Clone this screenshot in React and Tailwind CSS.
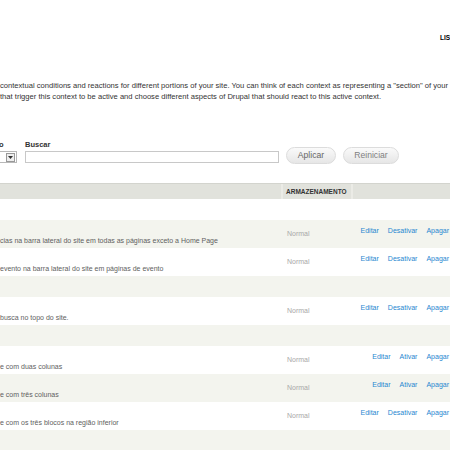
import React from "react";

const rows = [
  { type: "group" },
  { type: "item", desc: "cias na barra lateral do site em todas as páginas exceto a Home Page", active: true },
  { type: "item", desc: "evento na barra lateral do site em páginas de evento", active: true },
  { type: "group" },
  { type: "item", desc: "busca no topo do site.", active: true },
  { type: "group" },
  { type: "item", desc: "e com duas colunas", active: false },
  { type: "item", desc: "e com três colunas", active: false },
  { type: "item", desc: "e com os três blocos na região inferior", active: true },
  { type: "group" },
];

function Row({ row, index }) {
  const bg = index % 2 === 0 ? "bg-white" : "bg-[#f3f4ee]";
  if (row.type === "group") {
    return <div className={`h-[21px] ${bg}`} />;
  }
  return (
    <div className={`flex h-[28px] ${bg}`}>
      <div className="w-[281px] pt-[15px] text-[#5e5e5e] leading-[11px] whitespace-nowrap">
        {row.desc}
      </div>
      <div className="w-[72px] flex items-center pl-[6px] pt-[1px] text-[#a8a8a8]">
        Normal
      </div>
      <div className="flex-1 flex justify-end gap-[9px] pr-[31px] pt-[5px] leading-[11px] text-[#1f87d0]">
        <a href="#">Editar</a>
        <a href="#">{row.active ? "Desativar" : "Ativar"}</a>
        <a href="#">Apagar</a>
      </div>
    </div>
  );
}

export default function App() {
  return (
    <div className="w-[450px] h-[450px] overflow-hidden bg-white font-['Liberation_Sans',Arial,sans-serif] text-[7px]">
      <div className="w-[480px]">
        {/* Tabs */}
        <div className="h-[80px] pt-[33px] pl-[440px]">
          <span className="font-bold text-black text-[6.5px] leading-[8px]">LISTA</span>
        </div>

        {/* Help text */}
        <div className="h-[60px] text-[#333] text-[7.6px] leading-[11px] whitespace-nowrap">
          <p>contextual conditions and reactions for different portions of your site. You can think of each context as representing a "section" of your site.</p>
          <p>that trigger this context to be active and choose different aspects of Drupal that should react to this active context.</p>
        </div>

        {/* Filters */}
        <div className="h-[43px] flex items-start">
          <div className="flex flex-col">
            <span className="font-bold text-[#333] leading-[10px] text-[7.5px] -ml-[1px]">o</span>
            <div className="mt-[1px] w-[17px] h-[12px] border border-l-0 border-[#b8b8b8] bg-white flex items-center justify-end pr-[1px]">
              <div className="w-[9px] h-[9px] border border-[#999] bg-[#eee] flex items-center justify-center">
                <svg width="5" height="3" viewBox="0 0 5 3">
                  <path d="M0 0h5L2.5 3z" fill="#333" />
                </svg>
              </div>
            </div>
          </div>
          <div className="flex flex-col ml-[8px]">
            <span className="font-bold text-[#333] leading-[10px] text-[7.5px]">Buscar</span>
            <div className="mt-[1px] w-[254px] h-[12px] border border-[#c8c8c8] bg-white" />
          </div>
          <button className="ml-[7px] mt-[7px] w-[50px] h-[17px] rounded-full border border-[#dcdcdc] bg-gradient-to-b from-[#fafafa] to-[#e6e6e6] text-[#666] text-[8.6px] leading-[15px]">
            Aplicar
          </button>
          <button className="ml-[7px] mt-[7px] w-[56px] h-[17px] rounded-full border border-[#dcdcdc] bg-gradient-to-b from-[#fafafa] to-[#e6e6e6] text-[#808080] text-[8.6px] leading-[15px]">
            Reiniciar
          </button>
        </div>

        {/* Table */}
        <div>
          <div className="flex h-[16px] bg-[#e1e2dc] border-t border-[#d3d4ce]">
            <div className="w-[281px]" />
            <div className="w-[72px] border-x-2 border-[#ebebe6] pl-[3px] flex items-center font-bold text-[#333] text-[6.5px]">
              ARMAZENAMENTO
            </div>
            <div className="flex-1" />
          </div>
          {rows.map((row, i) => (
            <Row key={i} row={row} index={i} />
          ))}
        </div>
      </div>
    </div>
  );
}
